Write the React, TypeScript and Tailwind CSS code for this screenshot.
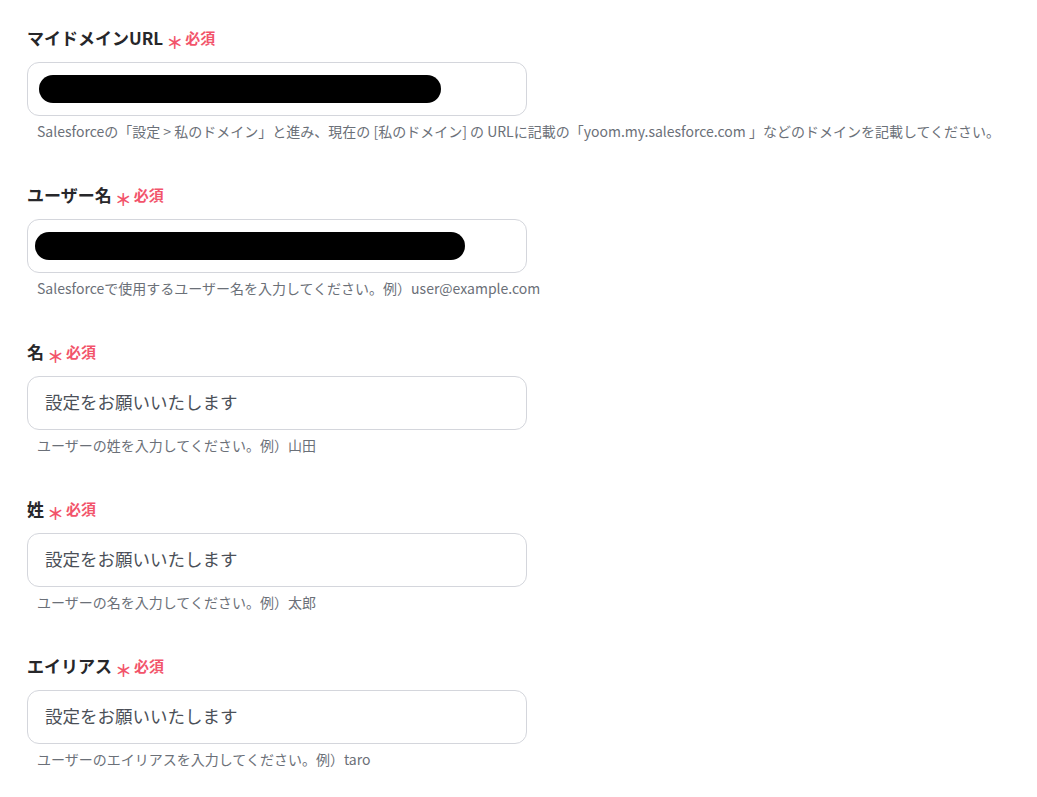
const FONT = "font-['Noto_Sans_CJK_JP','Noto_Sans',sans-serif]";

type Field = {
  label: string;
  help: string;
  value?: string;
  redact?: 'url' | 'user';
};

const FIELDS: Field[] = [
  {
    label: 'マイドメインURL',
    help: 'Salesforceの「設定 > 私のドメイン」と進み、現在の [私のドメイン] の URLに記載の「yoom.my.salesforce.com 」などのドメインを記載してください。',
    redact: 'url',
  },
  {
    label: 'ユーザー名',
    help: 'Salesforceで使用するユーザー名を入力してください。例）user@example.com',
    redact: 'user',
  },
  { label: '名', help: 'ユーザーの姓を入力してください。例）山田', value: '設定をお願いいたします' },
  { label: '姓', help: 'ユーザーの名を入力してください。例）太郎', value: '設定をお願いいたします' },
  { label: 'エイリアス', help: 'ユーザーのエイリアスを入力してください。例）taro', value: '設定をお願いいたします' },
];

// red "＊ 必須" marker after a label
function Required() {
  return (
    <span className="ml-[3px] inline-flex items-center text-[#f2546b]">
      <span className="text-[17px] leading-none translate-y-[3px]">＊</span>
      <span className="ml-[2px] text-[15px] font-bold">必須</span>
    </span>
  );
}

function FormField({ field }: { field: Field }) {
  return (
    <div className="flex flex-col">
      <div className="flex items-center h-6 text-[17px] font-bold text-[#27272a] leading-6">
        {field.label}
        <Required />
      </div>
      <div className="mt-3 w-[500px] h-[54px] rounded-xl border border-[#d4d6dc] bg-white flex items-center">
        {field.redact === 'url' && (
          <div className="ml-[11px] w-[402px] h-[28px] rounded-full bg-black" />
        )}
        {field.redact === 'user' && (
          <div className="ml-[7px] w-[430px] h-[28px] rounded-full bg-black" />
        )}
        {field.value && (
          <span className="ml-[17px] text-[17.5px] text-[#4b5058] -translate-y-[1px]">{field.value}</span>
        )}
      </div>
      <div className="mt-[5px] pl-[10px] text-[14px] leading-5 text-[#6b7078] whitespace-nowrap">
        {field.help}
      </div>
    </div>
  );
}

export default function App() {
  return (
    <div className={`${FONT} min-h-screen bg-white pl-[27px] pt-[26px]`}>
      <div className="flex flex-col gap-[42px]">
        {FIELDS.map(f => (
          <FormField key={f.label} field={f} />
        ))}
      </div>
    </div>
  );
}
